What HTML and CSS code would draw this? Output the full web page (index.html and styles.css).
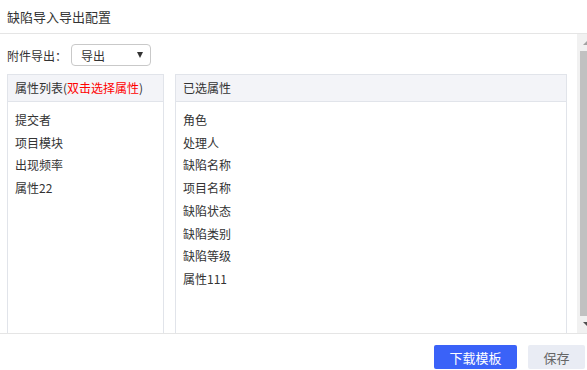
FILE: index.html
```html
<!DOCTYPE html>
<html lang="zh-CN">
<head>
    <meta charset="UTF-8">
    <title>缺陷导入导出配置</title>
    <link rel="stylesheet" href="styles.css">
</head>
<body>
    <div class="dialog">
        <div class="dialog-header">缺陷导入导出配置</div>

        <div class="dialog-body">
            <div class="content">
                <div class="export-row">
                    <span class="export-label">附件导出：</span>
                    <div class="select">
                        <span>导出</span>
                        <span class="select-arrow"></span>
                    </div>
                </div>

                <div class="panels">
                    <div class="panel panel-left">
                        <div class="panel-header">属性列表(<span class="hint">双击选择属性</span>)</div>
                        <ul class="attr-list">
                            <li>提交者</li>
                            <li>项目模块</li>
                            <li>出现频率</li>
                            <li>属性22</li>
                        </ul>
                    </div>
                    <div class="panel panel-right">
                        <div class="panel-header">已选属性</div>
                        <ul class="attr-list">
                            <li>角色</li>
                            <li>处理人</li>
                            <li>缺陷名称</li>
                            <li>项目名称</li>
                            <li>缺陷状态</li>
                            <li>缺陷类别</li>
                            <li>缺陷等级</li>
                            <li>属性111</li>
                        </ul>
                    </div>
                </div>
            </div>

            <div class="scrollbar">
                <div class="scroll-btn up"></div>
                <div class="scroll-thumb"></div>
                <div class="scroll-btn down"></div>
            </div>
        </div>

        <div class="dialog-footer">
            <button class="btn btn-primary">下载模板</button>
            <button class="btn btn-default">保存</button>
        </div>
    </div>
</body>
</html>
```

FILE: styles.css
```css
* {
    box-sizing: border-box;
}
body {
    margin: 0;
    font-family: "Noto Sans CJK SC", "Liberation Sans", sans-serif;
    font-size: 12px;
    color: #333;
    background: #fff;
}
.dialog {
    width: 587px;
    height: 370px;
    display: flex;
    flex-direction: column;
    overflow: hidden;
}
.dialog-header {
    height: 34px;
    line-height: 33px;
    padding-left: 7px;
    font-size: 13px;
    border-bottom: 1px solid #e5e5e5;
    flex-shrink: 0;
}
.dialog-body {
    flex: 1;
    display: flex;
    min-height: 0;
}
.content {
    flex: 1;
    display: flex;
    flex-direction: column;
    padding: 10px 10px 0 7px;
}
.export-row {
    display: flex;
    align-items: center;
    height: 22px;
    margin-bottom: 8px;
}
.export-label {
    width: 64px;
}
.select {
    width: 80px;
    height: 22px;
    border: 1px solid #c9c9c9;
    border-radius: 4px;
    display: flex;
    align-items: center;
    justify-content: space-between;
    padding: 0 7px 0 9px;
}
.select-arrow {
    width: 0;
    height: 0;
    border-left: 3.5px solid transparent;
    border-right: 3.5px solid transparent;
    border-top: 6px solid #333;
}
.panels {
    flex: 1;
    display: flex;
    gap: 11px;
}
.panel {
    border: 1px solid #e1e4ea;
    border-bottom: none;
}
.panel-left {
    width: 157px;
}
.panel-right {
    flex: 1;
}
.panel-header {
    height: 27px;
    line-height: 25px;
    padding-left: 7px;
    background-color: #f3f4f8;
    border-bottom: 1px solid #e1e4ea;
}
.hint {
    color: #f00;
}
.attr-list {
    list-style: none;
    margin: 0;
    padding: 7px 0 0 7px;
}
.attr-list li {
    line-height: 22.7px;
}
.scrollbar {
    width: 10px;
    background-color: #f1f1f1;
    display: flex;
    flex-direction: column;
    align-items: flex-end;
}
.scroll-btn {
    height: 17px;
    width: 10px;
    position: relative;
}
.scroll-btn.up::after,
.scroll-btn.down::after {
    content: "";
    position: absolute;
    right: -4px;
    border-left: 4px solid transparent;
    border-right: 4px solid transparent;
}
.scroll-btn.up::after {
    top: 7px;
    border-bottom: 4px solid #a3a3a3;
}
.scroll-btn.down::after {
    top: 6px;
    border-top: 4px solid #505050;
}
.scroll-thumb {
    flex: 1;
    width: 7px;
    background-color: #c1c1c1;
}
.dialog-footer {
    height: 37px;
    border-top: 1px solid #e5e5e5;
    display: flex;
    justify-content: flex-end;
    align-items: flex-start;
    gap: 11px;
    padding: 11px 2px 0 0;
    flex-shrink: 0;
}
.btn {
    height: 24px;
    border: none;
    border-radius: 2px;
    font-family: inherit;
    font-size: 13px;
    padding: 0;
    cursor: pointer;
}
.btn-primary {
    width: 83px;
    background-color: #3a62f8;
    color: #fff;
}
.btn-default {
    width: 57px;
    background-color: #e9ecf4;
    color: #666;
}
```
